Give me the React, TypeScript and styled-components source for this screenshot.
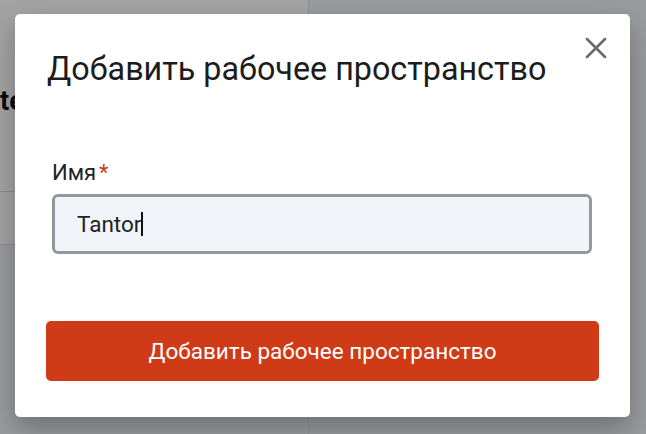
import React from "react";
import styled, { createGlobalStyle } from "styled-components";

const Global = createGlobalStyle`
  html, body { margin: 0; padding: 0; }
  body {
    width: 646px; height: 434px; overflow: hidden;
    font-family: Roboto, "Noto Sans", "Liberation Sans", sans-serif;
  }
  * { box-sizing: border-box; }
`;

const Page = styled.div`
  position: relative;
  width: 646px;
  height: 434px;
  display: flex;
  background: #f1f2f8;
  overflow: hidden;
`;

const Sidebar = styled.aside`
  width: 309px;
  flex-shrink: 0;
  display: flex;
  flex-direction: column;
  border-right: 1px solid #e0e1e6;
`;

const SideHead = styled.div`
  height: 192px;
  background: #fff;
  padding-top: 85px;
  border-bottom: 1px solid #d9dadf;
  font-size: 27px;
  line-height: 32px;
  font-weight: 700;
  color: #111;
  white-space: nowrap;
  overflow: hidden;
`;

const SideRow = styled.div`
  height: 53px;
  background: #fff;
  border-bottom: 1px solid #d9dadf;
`;

const Main = styled.main`
  flex: 1;
  background: #f1f2f8;
`;

const Overlay = styled.div`
  position: absolute;
  inset: 0;
  background: rgba(0, 0, 0, 0.36);
  padding: 14px 16px 0 15px;
`;

const Modal = styled.div`
  width: 615px;
  height: 403px;
  background: #fff;
  border-radius: 5px;
  box-shadow: 0 12px 28px rgba(0, 0, 0, 0.28);
  position: relative;
  padding: 35px 31px 0 31px;
  display: flex;
  flex-direction: column;
`;

const Close = styled.button`
  position: absolute;
  top: 22px;
  right: 22px;
  width: 24px;
  height: 24px;
  padding: 0;
  border: none;
  background: none;
  display: flex;
  align-items: center;
  justify-content: center;
  color: #6b6b6b;
`;

const Title = styled.h2`
  margin: 0 0 0 1px;
  font-size: 32.3px;
  font-weight: 400;
  color: #1c1c1c;
  line-height: 40px;
  white-space: nowrap;
`;

const Field = styled.div`
  margin-top: 71px;
  padding: 0 6px;
  display: flex;
  flex-direction: column;
  gap: 8px;
`;

const Label = styled.label`
  font-size: 22px;
  color: #222;
  line-height: 26px;
  display: flex;
  gap: 3px;
`;

const Req = styled.span`
  color: #d03a17;
`;

const InputBox = styled.div`
  height: 60px;
  width: 540px;
  border: 3px solid #95979c;
  border-radius: 6px;
  background: #f1f4f9;
  display: flex;
  align-items: center;
  padding-left: 22px;
  font-size: 22.5px;
  color: #222;
`;

const Caret = styled.span`
  display: inline-block;
  width: 2px;
  height: 24px;
  background: #111;
`;

const Submit = styled.button`
  margin-top: 67px;
  height: 60px;
  width: 553px;
  border: none;
  border-radius: 5px;
  background: #cf3a17;
  color: #fff;
  font-family: inherit;
  font-size: 22.5px;
`;

export default function App() {
  return (
    <>
      <Global />
      <Page>
        <Sidebar>
          <SideHead>tenants</SideHead>
          <SideRow />
        </Sidebar>
        <Main />
        <Overlay>
          <Modal>
            <Close aria-label="Закрыть">
              <svg width="22" height="22" viewBox="0 0 22 22">
                <path d="M2 2 L20 20 M20 2 L2 20" stroke="currentColor" strokeWidth="2.6" strokeLinecap="round" />
              </svg>
            </Close>
            <Title>Добавить рабочее пространство</Title>
            <Field>
              <Label>
                Имя<Req>*</Req>
              </Label>
              <InputBox>
                Tantor<Caret />
              </InputBox>
            </Field>
            <Submit>Добавить рабочее пространство</Submit>
          </Modal>
        </Overlay>
      </Page>
    </>
  );
}
